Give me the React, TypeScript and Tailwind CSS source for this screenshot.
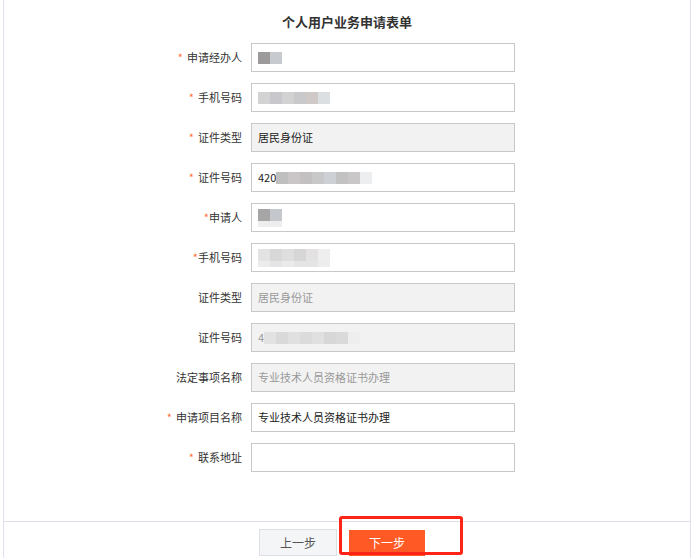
import React from "react";

type Row = {
  label: string;
  required?: boolean;
  tight?: boolean;
  value?: string;
  disabled?: boolean;
  muted?: boolean;
  blur?: string[];
  blur2?: string[];
  prefix?: string;
};

const rows: Row[] = [
  { label: "申请经办人", required: true, blur: ["#9c9a9b", "#c7cbcf"], blur2: [] },
  { label: "手机号码", required: true, blur: ["#d3d3d3", "#c8c8cc", "#d2d2d2", "#c9c9cc", "#cfcac7", "#dcdfe1"] },
  { label: "证件类型", required: true, value: "居民身份证", disabled: true },
  { label: "证件号码", required: true, prefix: "420", blur: ["#c0bfbf", "#cac6c7", "#c2c0c0", "#c8c8c8", "#cdd1d5", "#c2c2c3", "#c9c7c7", "#eceef0"] },
  { label: "申请人", required: true, tight: true, blur: ["#a6a6a6", "#c4c8cc"], blur2: ["#eeeeee", "#ededed"] },
  { label: "手机号码", required: true, tight: true, blur: ["#e3e3e3", "#d8d8d8", "#dedede", "#d6d6d6", "#e3e1e1", "#eeeeee"], blur2: ["#ececec", "#e4e5e7", "#eaeaea", "#e5e5e5", "#e5e5e6", "#eceded"] },
  { label: "证件类型", value: "居民身份证", disabled: true, muted: true },
  { label: "证件号码", disabled: true, muted: true, prefix: "4", blur: ["#e2e2e2", "#d9d9d9", "#e0e0e0", "#dbdbdb", "#e0e0e0", "#d7d7d7", "#dadada", "#eeeeee"] },
  { label: "法定事项名称", value: "专业技术人员资格证书办理", disabled: true, muted: true },
  { label: "申请项目名称", required: true, value: "专业技术人员资格证书办理" },
  { label: "联系地址", required: true },
];

function FormRow({ row }: { row: Row }) {
  return (
    <div className="flex items-center h-[29px]">
      <div className="w-[154px] pr-[9px] text-right text-[11px] text-[#333]">
        {row.required && (
          <span className={row.tight ? "text-[#ff6f3c] mr-0" : "text-[#ff6f3c] mr-[4px]"}>*</span>
        )}
        {row.label}
      </div>
      <div
        className={
          "relative w-[264px] h-[29px] border border-[#c8c8cc] flex items-center px-[6px] text-[11px] " +
          (row.disabled ? "bg-[#f2f2f2] " : "bg-white ") +
          (row.muted ? "text-[#999]" : "text-[#222]")
        }
      >
        {row.prefix && <span>{row.prefix}</span>}
        {row.value}
        {row.blur && (
          <div className="flex flex-col">
            <div className="flex">
              {row.blur.map((c, i) => (
                <div key={i} className="w-[12px] h-[12px]" style={{ background: c }} />
              ))}
            </div>
            {row.blur2 && row.blur2.length > 0 && (
              <div className="flex">
                {row.blur2.map((c, i) => (
                  <div key={i} className="w-[12px] h-[6px]" style={{ background: c }} />
                ))}
              </div>
            )}
          </div>
        )}
      </div>
    </div>
  );
}

export default function App() {
  return (
    <div
      className="w-[695px] h-[558px] bg-white overflow-hidden"
      style={{ fontFamily: '"Noto Sans CJK SC", "Liberation Sans", sans-serif' }}
    >
      <div className="ml-[3px] w-[688px] h-[558px] border-l border-r border-[#dfe2ec] flex flex-col">
        <div className="pl-[343px] pt-[13px] h-[43px]">
          <div className="w-0 flex justify-center">
            <h1 className="whitespace-nowrap text-[13px] font-bold text-[#333] leading-[18px]">个人用户业务申请表单</h1>
          </div>
        </div>
        <div className="flex flex-col gap-[11px] pl-[93px]">
          {rows.map((r, i) => (
            <FormRow key={i} row={r} />
          ))}
        </div>
        <div className="mt-[49px] border-t border-[#dcdfe6] flex pl-[255px] pt-[7px] gap-[12px]">
          <button className="w-[78px] h-[27px] border border-[#dcdfe6] bg-[#f4f5f7] text-[12px] text-[#555]">
            上一步
          </button>
          <div className="relative">
            <div className="absolute left-[-10px] top-[-13px] w-[124px] h-[39px] border-[3px] border-[#ff2418] rounded-[3px]" />
            <button className="w-[76px] h-[26px] mt-[1px] bg-[#ff5a26] text-[12px] text-white">下一步</button>
          </div>
        </div>
      </div>
    </div>
  );
}
